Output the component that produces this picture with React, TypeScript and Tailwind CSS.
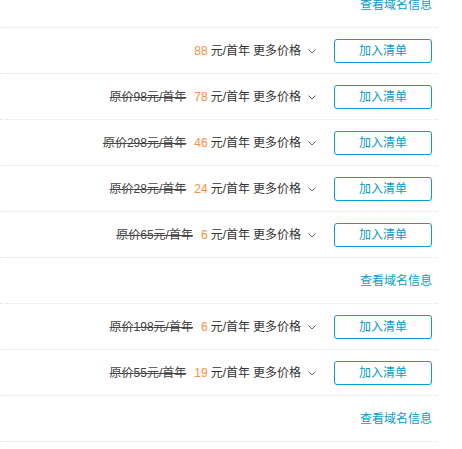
const ROWS: Array<{ kind: 'info' } | { kind: 'price'; orig?: string; price: string }> = [
  { kind: 'info' },
  { kind: 'price', price: '88' },
  { kind: 'price', orig: '98', price: '78' },
  { kind: 'price', orig: '298', price: '46' },
  { kind: 'price', orig: '28', price: '24' },
  { kind: 'price', orig: '65', price: '6' },
  { kind: 'info' },
  { kind: 'price', orig: '198', price: '6' },
  { kind: 'price', orig: '55', price: '19' },
  { kind: 'info' },
];

function Chevron() {
  return (
    <svg width="8" height="5" viewBox="0 0 8 5" className="ml-[7px] mt-[1px]">
      <path d="M0.5 0.5 L4 4 L7.5 0.5" fill="none" stroke="#666" strokeWidth="1" />
    </svg>
  );
}

export default function App() {
  return (
    <div
      className="w-[438px] bg-white text-[12px] text-[#333] -mt-[18px]"
      style={{ fontFamily: '"Liberation Sans", "Noto Sans CJK SC", sans-serif' }}
    >
      {ROWS.map((row, i) => (
        <div
          key={i}
          className="h-[46px] flex items-center justify-end pr-[6px] border-b border-dotted border-[#e3e3e3]"
        >
          {row.kind === 'info' ? (
            <a href="#" className="text-[#0a9dc7] leading-none">
              查看域名信息
            </a>
          ) : (
            <div className="flex items-center">
              {row.orig && (
                <span className="line-through text-[#444] mr-[8px]">原价{row.orig}元/首年</span>
              )}
              <span className="text-[#ff8c3c]">{row.price}</span>
              <span className="ml-[3px]">元/首年</span>
              <span className="ml-[3px]">更多价格</span>
              <Chevron />
              <button className="ml-[18px] w-[98px] h-[24px] border border-[#0aa0cc] rounded-[3px] text-[#0a9dc7] text-[12px] leading-none bg-white">
                加入清单
              </button>
            </div>
          )}
        </div>
      ))}
    </div>
  );
}
